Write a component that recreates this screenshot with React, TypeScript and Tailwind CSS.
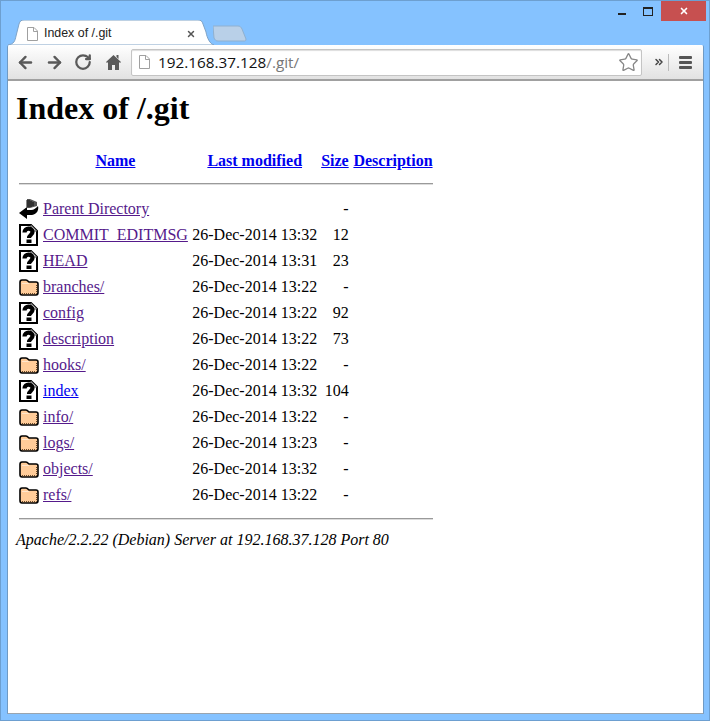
import { ArrowLeft, ArrowRight, ChevronsRight, RotateCw, Star, X } from "lucide-react";

const rows = [
	{ icon: "back", name: "Parent Directory", date: "", size: "-", visited: true },
	{ icon: "unknown", name: "COMMIT_EDITMSG", date: "26-Dec-2014 13:32", size: "12", visited: true },
	{ icon: "unknown", name: "HEAD", date: "26-Dec-2014 13:31", size: "23", visited: true },
	{ icon: "folder", name: "branches/", date: "26-Dec-2014 13:22", size: "-", visited: true },
	{ icon: "unknown", name: "config", date: "26-Dec-2014 13:22", size: "92", visited: true },
	{ icon: "unknown", name: "description", date: "26-Dec-2014 13:22", size: "73", visited: true },
	{ icon: "folder", name: "hooks/", date: "26-Dec-2014 13:22", size: "-", visited: true },
	{ icon: "unknown", name: "index", date: "26-Dec-2014 13:32", size: "104", visited: false },
	{ icon: "folder", name: "info/", date: "26-Dec-2014 13:22", size: "-", visited: true },
	{ icon: "folder", name: "logs/", date: "26-Dec-2014 13:23", size: "-", visited: true },
	{ icon: "folder", name: "objects/", date: "26-Dec-2014 13:32", size: "-", visited: true },
	{ icon: "folder", name: "refs/", date: "26-Dec-2014 13:22", size: "-", visited: true },
];

function FileIcon() {
	return (
		<svg width="11" height="14" viewBox="0 0 11 14" fill="none" stroke="#a0a0a0" className="shrink-0">
			<path d="M.5.5h6.5l3.5 3.5v9.5h-10z" fill="#fff" />
			<path d="M6.5.5v4h4" />
		</svg>
	);
}

function HomeIcon() {
	return (
		<svg width="15" height="16" viewBox="0 0 15 16" fill="#5a5a5a" className="ml-[14px] shrink-0">
			<path d="M7.5 1L15 8l-1 1-1-1v8H9v-5H6v5H2V8L1 9 0 8z" />
			<path d="M10.5 1h2v4l-2-2z" />
		</svg>
	);
}

function UnknownIcon() {
	return (
		<svg width="20" height="22" viewBox="0 0 20 22" fill="none" className="block">
			<path d="M1 1h11l6 6v14H1z" fill="#fff" stroke="#000" strokeWidth="2" />
			<path d="M12 1v6h6z" fill="#ccc" stroke="#555" />
			<path d="M5.500 8.500C5.500 3.500 13.500 3.500 13.500 8c0 3-3.500 3-3.500 6" stroke="#000" strokeWidth="4.200" />
			<path d="M7.500 15.500h5v3.500h-5z" fill="#000" />
		</svg>
	);
}

function FolderIcon() {
	return (
		<svg width="20" height="18" viewBox="0 0 20 18" className="block">
			<path d="M1 4.500C1 3 2 2 3 2h4c1 0 2 1 3 2h7c1 0 2 1 2 2v8.500c0 1.500-1 2.500-2 2.500H3c-1 0-2-1-2-2.500z" fill="#ffcc99" stroke="#000" strokeWidth="1.6" />
			<path d="M3 15.500h14.500V7" fill="none" stroke="#6b4a2a" strokeDasharray="1 1" />
			<path d="M3 5.500h7" stroke="#ffe6cc" />
		</svg>
	);
}

function BackIcon() {
	return (
		<svg width="20" height="20" viewBox="0 0 20 20" className="block">
			<path d="M8 0h3l7 3v4l-7 2H8z" fill="#555" />
			<path d="M8 1v7M10 1v7M12 2v6M14 3v4" stroke="#111" />
			<path d="M0 14l8-6v3h4c3 0 5-2 7-4 1 4-1 8-6 9H8v4z" fill="#000" />
		</svg>
	);
}

function RowIcon({ type }: { type: string }) {
	if (type === "back") return <BackIcon />;
	if (type === "folder") return <FolderIcon />;
	return <UnknownIcon />;
}

export default function App() {
	return (
		<div className="flex h-[721px] w-[710px] flex-col overflow-hidden border border-[#6d9fd0] bg-[#85c2ff] font-['Liberation_Sans',sans-serif]">
			{/* title bar */}
			<div className="flex h-[19px] items-start justify-end pr-[3px]">
				<div className="mr-[17px] mt-[12px] h-[2px] w-[8px] bg-[#222]" />
				<div className="mr-[8px] mt-[6px] h-[9px] w-[10px] border border-t-2 border-[#222]" />
				<div className="flex h-[20px] w-[45px] items-center justify-center bg-[#c75050]">
					<X className="h-[10px] w-[10px] text-white" strokeWidth={4} />
				</div>
			</div>

			{/* tab strip */}
			<div className="flex h-[25px] items-end pl-[7px]">
				<div className="relative flex h-[25px] w-[206px] items-center pl-[19px] pr-[18px] pt-[2px]">
					<svg width="206" height="25" viewBox="0 0 206 25" className="absolute left-0 top-0">
						<path d="M0 25c6-1 7-4 8-9l3-12c1-3 2-4 5-4h174c3 0 4 1 5 4l3 8c1 6 4 12 8 13z" fill="#fff" stroke="#7fa3c7" />
					</svg>
					<div className="relative mr-[6px]">
						<FileIcon />
					</div>
					<span className="relative flex-1 text-[12.4px] text-[#222]">Index of /.git</span>
					<X className="relative h-[10px] w-[10px] text-[#555]" strokeWidth={3.5} />
				</div>
				<svg width="34" height="17" viewBox="0 0 34 17" className="mb-[3px] -ml-[1px]">
					<path d="M5 16c-2 0-3-1-4-3L0 1h25c2 0 3 1 4 3l4 10c0 2-1 2-2 2z" fill="#b9d0e8" stroke="#8fb0d0" />
				</svg>
			</div>

			{/* toolbar and page */}
			<div className="ml-[6px] mr-[5px] flex h-[669px] flex-col overflow-hidden rounded-t-[2px] border-x border-b border-x-[#6f9ac4] border-b-[#9aa4ae]">
				<div className="flex h-[36px] items-center border-b-2 border-[#a0a0a0] bg-gradient-to-b from-white to-[#e2e2e2] pl-[8px] pr-[9px]">
					<ArrowLeft className="h-[19px] w-[19px] text-[#5a5a5a]" strokeWidth={3} />
					<ArrowRight className="ml-[10px] h-[19px] w-[19px] text-[#5a5a5a]" strokeWidth={3} />
					<RotateCw className="ml-[10px] h-[18px] w-[18px] text-[#5a5a5a]" strokeWidth={3} />
					<HomeIcon />
					<div className="ml-[10px] flex h-[27px] w-[511px] items-center rounded-[2px] border border-[#c4c4c4] bg-white pl-[7px] pr-[2px] shadow-[inset_0_1px_1px_#ddd]">
						<FileIcon />
						<span className="ml-[8px] flex-1 font-['Open_Sans',sans-serif] text-[15.3px] text-[#111]">
							192.168.37.128<span className="text-[#777]">/.git/</span>
						</span>
						<Star className="h-[21px] w-[21px] text-[#888]" strokeWidth={1.5} />
					</div>
					<ChevronsRight className="ml-[11px] h-[12px] w-[12px] text-[#444]" strokeWidth={3} />
					<div className="ml-[3px] h-[17px] w-px bg-[#bbb]" />
					<div className="ml-[10px] flex flex-col gap-[2px]">
						<div className="h-[3px] w-[13px] rounded-[1px] bg-[#555]" />
						<div className="h-[3px] w-[13px] rounded-[1px] bg-[#555]" />
						<div className="h-[3px] w-[13px] rounded-[1px] bg-[#555]" />
					</div>
				</div>

				{/* directory listing */}
				<div className="flex-1 bg-white pl-[8px] pt-[9px] font-['Liberation_Serif',serif] text-[16px] leading-[18px] text-black">
					<h1 className="text-[32px] font-bold leading-[37px]">Index of /.git</h1>
					<table className="mt-[22px] border-separate border-spacing-[2px]">
						<thead>
							<tr>
								<th className="p-px" />
								<th className="p-px text-center font-bold">
									<a className="text-[#0000ee] underline">Name</a>
								</th>
								<th className="py-px pl-[1.4px] pr-px text-center font-bold">
									<a className="text-[#0000ee] underline">Last modified</a>
								</th>
								<th className="p-px text-center font-bold">
									<a className="text-[#0000ee] underline">Size</a>
								</th>
								<th className="w-[82.6px] p-px text-center font-bold">
									<a className="text-[#0000ee] underline">Description</a>
								</th>
							</tr>
							<tr>
								<th colSpan={5} className="p-px">
									<div className="my-[9px] h-[2px] border-y border-t-[#9a9a9a] border-b-[#dcdcdc]" />
								</th>
							</tr>
						</thead>
						<tbody>
							{rows.map((row) => (
								<tr key={row.name}>
									<td className="h-[24px] p-px align-middle">
										<RowIcon type={row.icon} />
									</td>
									<td className="p-px">
										<a className={row.visited ? "text-[#551a8b] underline" : "text-[#0000ee] underline"}>{row.name}</a>
									</td>
									<td className="py-px pl-[1.4px] pr-px text-right">{row.date}</td>
									<td className="p-px text-right">{row.size}</td>
									<td className="p-px" />
								</tr>
							))}
							<tr>
								<th colSpan={5} className="p-px">
									<div className="mt-[8px] h-[2px] border-y border-t-[#9a9a9a] border-b-[#dcdcdc]" />
								</th>
							</tr>
						</tbody>
					</table>
					<address className="mt-[8px] italic">Apache/2.2.22 (Debian) Server at 192.168.37.128 Port 80</address>
				</div>
			</div>
		</div>
	);
}
